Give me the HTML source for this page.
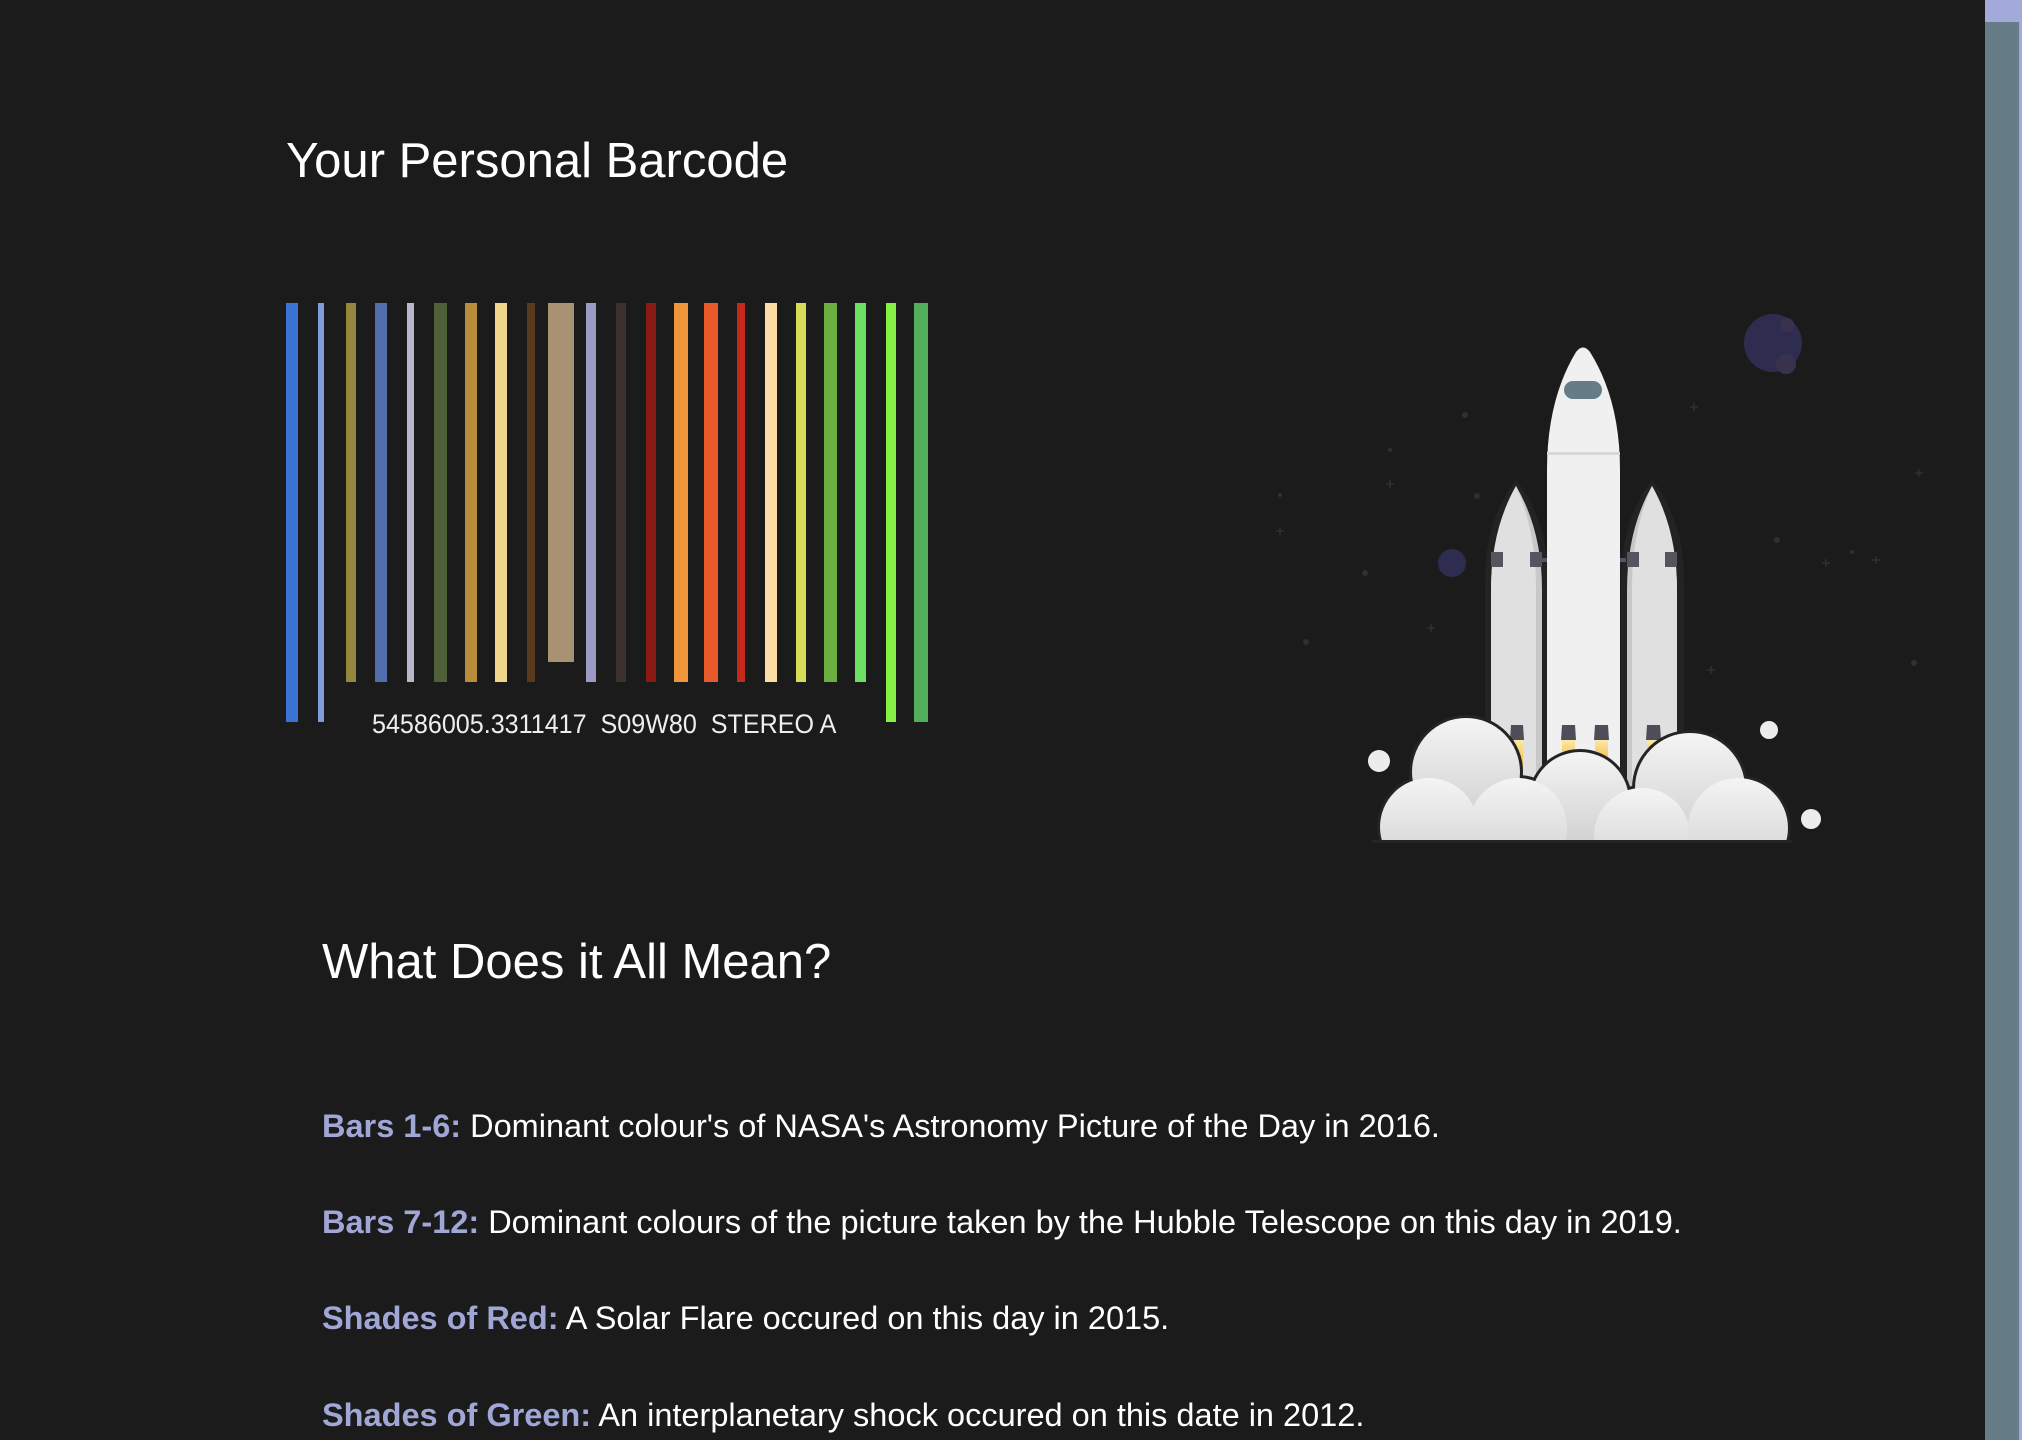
<!DOCTYPE html>
<html><head><meta charset="utf-8"><style>
html,body{margin:0;padding:0;background:#1b1b1b;width:2022px;height:1440px;overflow:hidden;font-family:"Liberation Sans",sans-serif;color:#fff}
.h{position:absolute;font-size:49px;font-weight:normal;margin:0;white-space:nowrap;line-height:1}
.bar{position:absolute;top:303px}
.p{position:absolute;left:322px;font-size:32.5px;white-space:nowrap;line-height:1}
.p b{color:#a0a7d6}
.sb{position:absolute;left:1985px;top:0;width:37px;height:1440px;background:#a3a9d9}
.th{position:absolute;left:1985px;top:22px;width:34px;height:1418px;background:#667d87}
</style></head><body>
<div class="h" style="left:286px;top:137px">Your Personal Barcode</div>
<div class="bar" style="left:286px;width:12px;height:419px;background:#3b73d4"></div>
<div class="bar" style="left:318px;width:6px;height:419px;background:#7f9bdc"></div>
<div class="bar" style="left:346px;width:10px;height:379px;background:#94863e"></div>
<div class="bar" style="left:375px;width:12px;height:379px;background:#536fab"></div>
<div class="bar" style="left:407px;width:7px;height:379px;background:#b8b8c8"></div>
<div class="bar" style="left:434px;width:13px;height:379px;background:#4f5f38"></div>
<div class="bar" style="left:465px;width:12px;height:379px;background:#b98c3a"></div>
<div class="bar" style="left:495px;width:12px;height:379px;background:#f0d688"></div>
<div class="bar" style="left:527px;width:8px;height:379px;background:#5a3a1e"></div>
<div class="bar" style="left:548px;width:26px;height:359px;background:#a79374"></div>
<div class="bar" style="left:586px;width:10px;height:379px;background:#9a9ac4"></div>
<div class="bar" style="left:616px;width:10px;height:379px;background:#3b3230"></div>
<div class="bar" style="left:646px;width:10px;height:379px;background:#8a1a14"></div>
<div class="bar" style="left:674px;width:14px;height:379px;background:#f0953a"></div>
<div class="bar" style="left:704px;width:14px;height:379px;background:#e8592a"></div>
<div class="bar" style="left:737px;width:8px;height:379px;background:#c42a1c"></div>
<div class="bar" style="left:765px;width:12px;height:379px;background:#fadca4"></div>
<div class="bar" style="left:796px;width:10px;height:379px;background:#d4dc58"></div>
<div class="bar" style="left:824px;width:13px;height:379px;background:#6cae40"></div>
<div class="bar" style="left:855px;width:11px;height:379px;background:#6ce064"></div>
<div class="bar" style="left:886px;width:10px;height:419px;background:#84f044"></div>
<div class="bar" style="left:914px;width:14px;height:419px;background:#50ae5c"></div>
<div style="position:absolute;left:372px;top:709px;font-size:27px;white-space:nowrap;color:#eee;transform:scaleX(0.93);transform-origin:0 0">54586005.3311417&nbsp;&nbsp;S09W80&nbsp;&nbsp;STEREO A</div>

<svg style="position:absolute;left:0;top:0" width="2022" height="1440">
<g fill="#303030">
<circle cx="1465" cy="415" r="3"/><circle cx="1477" cy="496" r="3"/><circle cx="1365" cy="573" r="3"/><circle cx="1306" cy="642" r="3"/><circle cx="1777" cy="540" r="3"/><circle cx="1914" cy="663" r="3"/><circle cx="1390" cy="450" r="2"/><circle cx="1280" cy="495" r="2"/><circle cx="1852" cy="552" r="2"/>
</g>
<g stroke="#303030" stroke-width="1.5">
<path d="M1690 407h8M1694 403v8M1386 484h8M1390 480v8M1872 560h8M1876 556v8M1822 563h8M1826 559v8M1707 670h8M1711 666v8M1427 628h8M1431 624v8M1915 473h8M1919 469v8M1276 531h8M1280 527v8"/>
</g>
<circle cx="1773" cy="343" r="29" fill="#2e2d4f"/>
<circle cx="1787" cy="325" r="7" fill="#38324f"/><circle cx="1786" cy="364" r="10" fill="#38324f"/>
<circle cx="1452" cy="563" r="14" fill="#2e2d4f"/>
<path d="M1485 812V580Q1485 520 1516 480Q1548 520 1548 580V812Z" fill="#232323"/>
<path d="M1621 812V580Q1621 520 1652 480Q1684 520 1684 580V812Z" fill="#232323"/>
<path d="M1491 808V590Q1491 530 1516 486Q1542 530 1542 590V808Z" fill="#c8c8c8"/>
<path d="M1491 808V590Q1491 530 1516 486Q1536 530 1536 590V808Z" fill="#e0e0e0"/>
<path d="M1627 808V590Q1627 530 1652 486Q1677 530 1677 590V808Z" fill="#c8c8c8"/>
<path d="M1632 808V590Q1632 530 1652 486Q1677 530 1677 590V808Z" fill="#e0e0e0"/>
<g fill="#55545f">
<rect x="1491" y="552" width="12" height="15"/><rect x="1530" y="552" width="12" height="15"/>
<rect x="1627" y="552" width="12" height="15"/><rect x="1665" y="552" width="12" height="15"/>
<rect x="1542" y="558" width="6" height="4"/><rect x="1620" y="558" width="6" height="4"/>
</g>
<path d="M1547 808V470Q1547 400 1576 352Q1583 343 1590 352Q1620 400 1620 470V808Z" fill="#f0f0f0"/>
<rect x="1547" y="452" width="73" height="3" fill="#d8d8d8"/>
<rect x="1564" y="381" width="38" height="18" rx="9" fill="#667d87"/>
<defs>
<linearGradient id="fl" x1="0" y1="0" x2="0" y2="1"><stop offset="0" stop-color="#fbe8a8"/><stop offset="0.4" stop-color="#f6c860"/><stop offset="1" stop-color="#e8502a"/></linearGradient>
<linearGradient id="cl" x1="0" y1="0" x2="0" y2="1"><stop offset="0" stop-color="#f4f4f4"/><stop offset="1" stop-color="#cfcfcf"/></linearGradient>
</defs>
<g fill="#262626"><rect x="1488" y="808" width="57" height="8"/><rect x="1544" y="808" width="79" height="8"/><rect x="1624" y="808" width="56" height="8"/></g>
<g fill="url(#fl)"><rect x="1511" y="740" width="12" height="45"/><rect x="1562" y="740" width="13" height="40"/><rect x="1595" y="740" width="13" height="40"/><rect x="1647" y="740" width="13" height="40"/></g>
<g fill="#4e4d58"><path d="M1511 725h12l1 15h-14z"/><path d="M1562 725h13l1 15h-15z"/><path d="M1595 725h13l1 15h-15z"/><path d="M1647 725h13l1 15h-15z"/></g>
<g fill="#242424">
<circle cx="1466" cy="772" r="57"/><circle cx="1690" cy="788" r="58"/><circle cx="1580" cy="801" r="52"/>
<circle cx="1429" cy="827" r="52"/><circle cx="1518" cy="827" r="52"/><circle cx="1642" cy="836" r="51"/><circle cx="1738" cy="828" r="53"/>
</g>
<g fill="url(#cl)">
<circle cx="1466" cy="772" r="54"/><circle cx="1690" cy="788" r="55"/><circle cx="1580" cy="801" r="49"/>
<circle cx="1429" cy="827" r="49"/><circle cx="1518" cy="827" r="49"/><circle cx="1642" cy="836" r="48"/><circle cx="1738" cy="828" r="50"/>
</g>
<rect x="1360" y="842" width="460" height="80" fill="#1b1b1b"/>
<rect x="1372" y="840" width="420" height="3" fill="#242424"/>
<g fill="#ececec"><circle cx="1379" cy="761" r="11"/><circle cx="1769" cy="730" r="9"/><circle cx="1811" cy="819" r="10"/></g>
</svg>

<div class="h" style="left:322px;top:938px">What Does it All Mean?</div>
<div class="p" style="top:1110px"><b>Bars 1-6:</b> Dominant colour's of NASA's Astronomy Picture of the Day in 2016.</div>
<div class="p" style="top:1206px"><b>Bars 7-12:</b> Dominant colours of the picture taken by the Hubble Telescope on this day in 2019.</div>
<div class="p" style="top:1302px"><b>Shades of Red:</b> A Solar Flare occured on this day in 2015.</div>
<div class="p" style="top:1399px"><b>Shades of Green:</b> An interplanetary shock occured on this date in 2012.</div>
<div class="sb"></div><div class="th"></div>
</body></html>
